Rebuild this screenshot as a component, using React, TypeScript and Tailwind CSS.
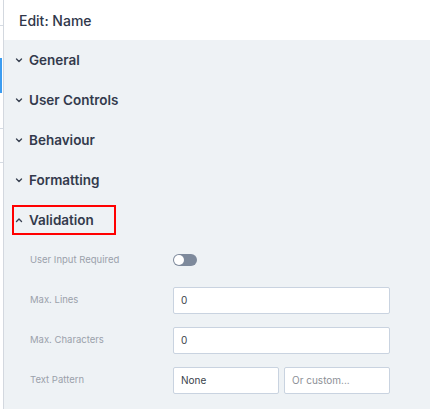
import React from 'react'

const sections = ['General', 'User Controls', 'Behaviour', 'Formatting']

const Chevron = ({ up = false }: { up?: boolean }) => (
  <svg width="8" height="8" viewBox="0 0 8 8" className="shrink-0">
    <path
      d={up ? 'M1.5 5.5 L4 3 L6.5 5.5' : 'M1.5 3 L4 5.5 L6.5 3'}
      fill="none"
      stroke="#3a4252"
      strokeWidth="1.4"
      strokeLinecap="round"
      strokeLinejoin="round"
    />
  </svg>
)

const Field = ({ label, children }: { label: string; children: React.ReactNode }) => (
  <div className="flex h-10 items-center">
    <div className="w-[169px] pl-[26px] text-[9.5px] text-[#9ba1ab]">{label}</div>
    {children}
  </div>
)

const Input = ({ value, placeholder, className }: { value?: string; placeholder?: string; className: string }) => (
  <div
    className={`flex h-[27px] items-center rounded-[2px] border border-[#c9d3e0] bg-white px-[7px] text-[10px] ${className} ${
      value ? 'text-[#3a3f4b]' : 'text-[#8c8f96]'
    }`}
  >
    {value ?? placeholder}
  </div>
)

export default function App() {
  return (
    <div className="flex h-[409px] w-[430px] overflow-hidden bg-white" style={{ fontFamily: 'Inter, "Noto Sans", sans-serif' }}>
      {/* edge of the page behind the panel */}
      <div className="relative w-[3px] shrink-0 bg-white">
        <div className="absolute top-[25px] h-px w-full bg-[#d5dbe3]" />
        <div className="absolute top-[58px] h-[35px] w-[2px] bg-[#3b9cf0]" />
        <div className="absolute top-[128px] h-px w-full bg-[#d5dbe3]" />
        <div className="absolute top-[162px] h-px w-full bg-[#d5dbe3]" />
      </div>
      <div className="w-px shrink-0 bg-[#d3d8df]" />

      <div className="flex flex-1 flex-col">
        <div className="flex h-10 items-center bg-white pl-[15px] text-[14px] font-medium text-[#30374a]">Edit: Name</div>

        <div className="flex-1 bg-[#eef2f5]">
          {sections.map((s) => (
            <div key={s} className="flex h-10 items-center gap-[6px] pl-[11px] text-[13.5px] font-semibold text-[#333a4c]">
              <Chevron />
              {s}
            </div>
          ))}

          <div className="flex h-10 items-center pl-[8px]">
            <div className="flex h-[30px] items-center gap-[6px] border-2 border-[#ff0000] pr-[20px] pl-[1px] text-[13.5px] font-semibold text-[#333a4c]">
              <Chevron up />
              Validation
            </div>
          </div>

          <Field label="User Input Required">
            <div className="flex h-[12px] w-[24px] items-center rounded-full bg-[#7e8a9c] px-px">
              <div className="h-[10px] w-[10px] rounded-full bg-white" />
            </div>
          </Field>
          <Field label="Max. Lines">
            <Input value="0" className="w-[217px]" />
          </Field>
          <Field label="Max. Characters">
            <Input value="0" className="w-[217px]" />
          </Field>
          <Field label="Text Pattern">
            <div className="flex gap-[5px]">
              <Input value="None" className="w-[106px]" />
              <Input placeholder="Or custom..." className="w-[106px]" />
            </div>
          </Field>
        </div>
      </div>
    </div>
  )
}
